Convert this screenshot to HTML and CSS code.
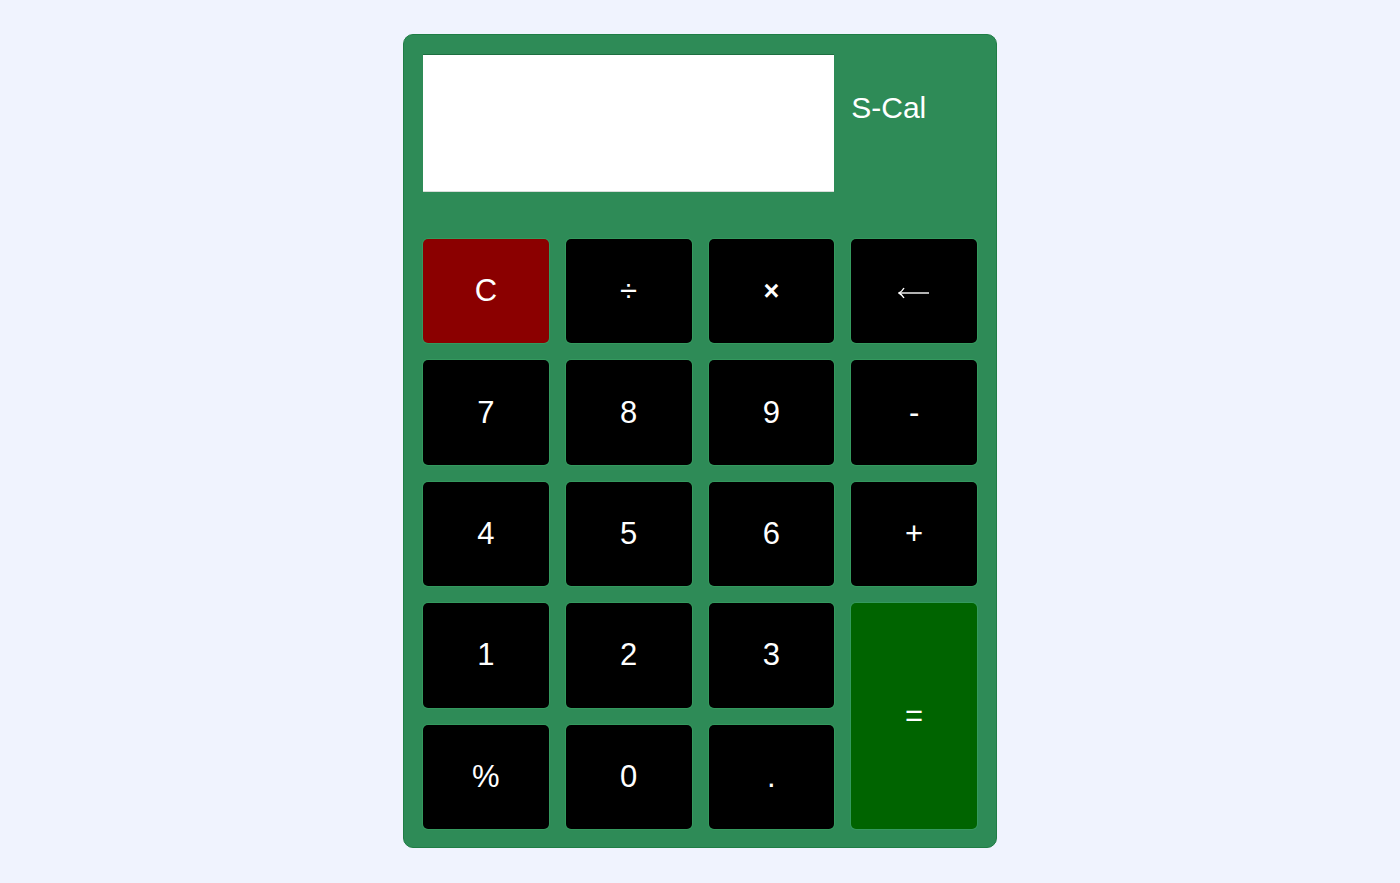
FILE: index.html
```html
<!DOCTYPE html>
<html lang="en">
<head>
<meta charset="utf-8">
<title>S-Cal</title>
<link rel="stylesheet" href="styles.css">
</head>
<body>
<div class="calc">
  <div class="display"></div>
  <div class="brand">S-Cal</div>
  <div class="keys">
    <button class="key clear">C</button>
    <button class="key">÷</button>
    <button class="key op-times">×</button>
    <button class="key back" aria-label="backspace"><svg class="arrow" width="32" height="12" viewBox="0 0 32 12"><path d="M1 6 H31" stroke="#fff" stroke-width="1.4" fill="none"/><path d="M6 1 Q4 4.5 1 6 Q4 7.5 6 11" stroke="#fff" stroke-width="1.4" fill="none"/></svg></button>
    <button class="key">7</button>
    <button class="key">8</button>
    <button class="key">9</button>
    <button class="key">-</button>
    <button class="key">4</button>
    <button class="key">5</button>
    <button class="key">6</button>
    <button class="key">+</button>
    <button class="key">1</button>
    <button class="key">2</button>
    <button class="key">3</button>
    <button class="key equals">=</button>
    <button class="key">%</button>
    <button class="key">0</button>
    <button class="key">.</button>
  </div>
</div>
</body>
</html>
```

FILE: styles.css
```css
html, body {
  margin: 0;
  padding: 0;
  background: #f0f3fe;
  font-family: "Liberation Sans", Arial, sans-serif;
}

body {
  padding-top: 34px;
}

.calc {
  box-sizing: border-box;
  width: 594px;
  margin: 0 auto;
  padding: 19px 19px 18px;
  background: #2e8b57;
  border: 1px solid #1f7d45;
  border-radius: 10px;
  display: grid;
  grid-template-columns: repeat(4, 1fr);
  column-gap: 17px;
  row-gap: 47px;
}

.display {
  grid-column: 1 / 4;
  height: 138px;
  background: #ffffff;
  border-top: 1px solid #1d6e40;
  border-bottom: 1px solid #d8dcd9;
  box-sizing: border-box;
}

.brand {
  color: #ffffff;
  font-size: 30px;
  line-height: 30px;
  padding-top: 39px;
}

.keys {
  grid-column: 1 / 5;
  display: grid;
  grid-template-columns: repeat(4, 1fr);
  grid-template-rows: repeat(5, 1fr);
  gap: 17px 17px;
  height: 590px;
}

.key {
  box-sizing: border-box;
  margin: 0;
  padding: 0;
  background: #000000;
  color: #ffffff;
  border: none;
  border-radius: 5px;
  box-shadow: 0 0 0 1px rgba(60, 170, 105, 0.45);
  font-family: "Liberation Sans", Arial, sans-serif;
  font-size: 31px;
  cursor: pointer;
}

.op-times {
  font-size: 27px;
  font-weight: bold;
}

.back {
  display: flex;
  align-items: center;
  justify-content: center;
  padding-top: 4px;
}

.arrow {
  display: block;
}

.clear {
  background: #8b0000;
}

.equals {
  background: #006400;
  grid-column: 4;
  grid-row: 4 / 6;
}
```
